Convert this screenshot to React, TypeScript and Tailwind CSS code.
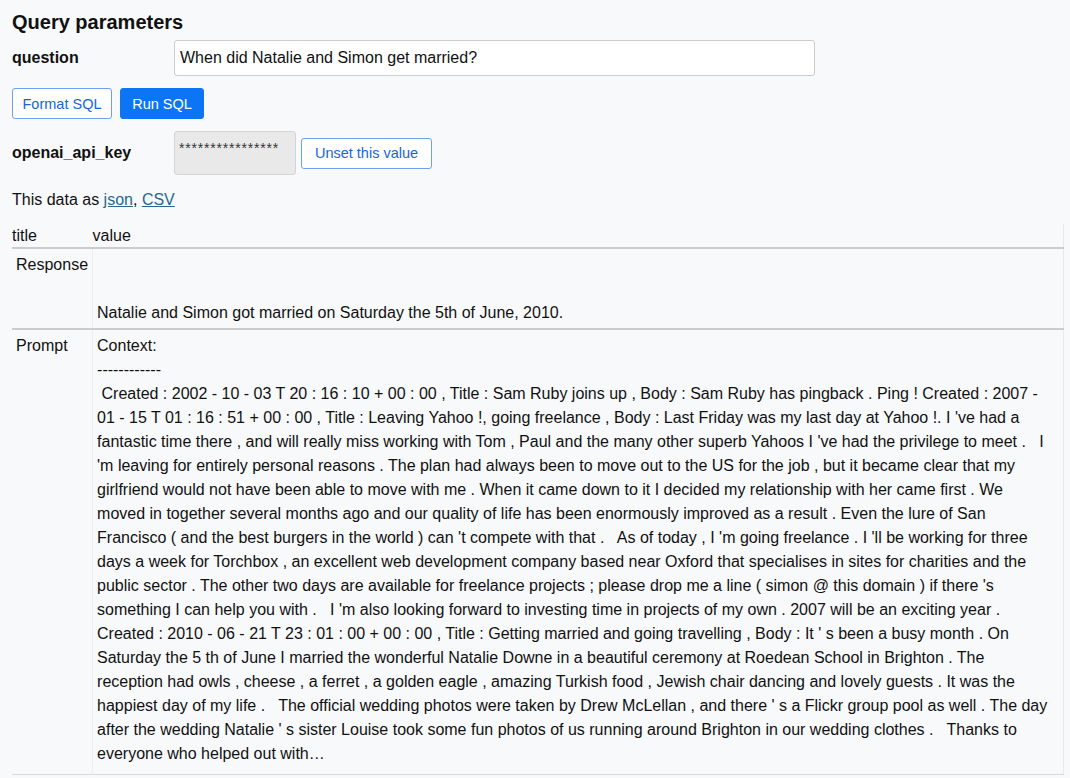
import React from 'react'

const font = { fontFamily: '"Liberation Sans", Arial, Helvetica, sans-serif' }

// line breaks kept where the original page wraps them
const prompt = [
  'Context:',
  '------------',
  ' Created : 2002 - 10 - 03 T 20 : 16 : 10 + 00 : 00 , Title : Sam Ruby joins up , Body : Sam Ruby has pingback . Ping ! Created : 2007 -',
  "01 - 15 T 01 : 16 : 51 + 00 : 00 , Title : Leaving Yahoo !, going freelance , Body : Last Friday was my last day at Yahoo !. I 've had a",
  "fantastic time there , and will really miss working with Tom , Paul and the many other superb Yahoos I 've had the privilege to meet .   I",
  "'m leaving for entirely personal reasons . The plan had always been to move out to the US for the job , but it became clear that my",
  'girlfriend would not have been able to move with me . When it came down to it I decided my relationship with her came first . We',
  'moved in together several months ago and our quality of life has been enormously improved as a result . Even the lure of San',
  "Francisco ( and the best burgers in the world ) can 't compete with that .   As of today , I 'm going freelance . I 'll be working for three",
  'days a week for Torchbox , an excellent web development company based near Oxford that specialises in sites for charities and the',
  "public sector . The other two days are available for freelance projects ; please drop me a line ( simon @ this domain ) if there 's",
  "something I can help you with .   I 'm also looking forward to investing time in projects of my own . 2007 will be an exciting year .",
  "Created : 2010 - 06 - 21 T 23 : 01 : 00 + 00 : 00 , Title : Getting married and going travelling , Body : It ' s been a busy month . On",
  'Saturday the 5 th of June I married the wonderful Natalie Downe in a beautiful ceremony at Roedean School in Brighton . The',
  'reception had owls , cheese , a ferret , a golden eagle , amazing Turkish food , Jewish chair dancing and lovely guests . It was the',
  "happiest day of my life .   The official wedding photos were taken by Drew McLellan , and there ' s a Flickr group pool as well . The day",
  "after the wedding Natalie ' s sister Louise took some fun photos of us running around Brighton in our wedding clothes .   Thanks to",
  'everyone who helped out with…',
].join('\n')

const rows = [
  { title: 'Response', value: '\n\nNatalie and Simon got married on Saturday the 5th of June, 2010.', pad: 'pb-[3px]' },
  { title: 'Prompt', value: prompt, pad: 'pb-2' },
]

export default function App() {
  return (
    <div style={font} className="min-h-[778px] bg-[#f8f9fb] pl-3 pt-2 text-[16px] leading-6 text-[#111]">
      <h3 className="text-[20px] font-bold leading-7">Query parameters</h3>

      {/* question */}
      <div className="mt-1 flex items-center">
        <label className="w-[162px] font-bold">question</label>
        <div className="flex h-9 w-[641px] items-center rounded-[3px] border border-[#ccc] bg-white px-[5px]">
          When did Natalie and Simon get married?
        </div>
      </div>

      <div className="mt-3 flex gap-2 text-[14.5px]">
        <button className="h-[31px] w-[100px] rounded-[3px] border border-[#6f9fee] bg-white text-[#1566dd]">
          Format SQL
        </button>
        <button className="h-[31px] w-[84px] rounded-[3px] border border-[#0b75f5] bg-[#0b75f5] text-white">
          Run SQL
        </button>
      </div>

      {/* api key */}
      <div className="mt-3 flex items-center">
        <label className="w-[162px] font-bold">openai_api_key</label>
        <div className="h-[44px] w-[122px] rounded-[3px] border border-[#d4d4d4] bg-[#e9e9e9] px-[4px] pt-[8px] text-[14px] leading-4 tracking-[0.8px] text-[#333]">
          ****************
        </div>
        <button className="ml-[5px] h-[31px] w-[131px] rounded-[3px] border border-[#6f9fee] bg-white text-[14.5px] text-[#1566dd]">
          Unset this value
        </button>
      </div>

      <p className="mt-[13px]">
        This data as{' '}
        <a href="#" className="text-[#276890] underline">
          json
        </a>
        ,{' '}
        <a href="#" className="text-[#276890] underline">
          CSV
        </a>
      </p>

      <table className="mt-3 w-[1052px] border-collapse border-r border-[#e8e9ec] text-left">
        <thead>
          <tr>
            <th className="w-[80px] border-b-2 border-[#cccccc] font-normal leading-[23px]">title</th>
            <th className="border-b-2 border-[#cccccc] font-normal leading-[23px]">value</th>
          </tr>
        </thead>
        <tbody>
          {rows.map((r, i) => (
            <tr key={r.title} className={i === 0 ? 'border-b-2 border-[#cccccc]' : 'border-b border-[#d9d9d9]'}>
              <td className={`px-1 pt-1 align-top ${r.pad}`}>{r.title}</td>
              <td className={`whitespace-pre-wrap border-l border-[#eceef1] pl-1 pr-[5px] pt-1 align-top ${r.pad}`}>
                {r.value}
              </td>
            </tr>
          ))}
        </tbody>
      </table>
    </div>
  )
}
